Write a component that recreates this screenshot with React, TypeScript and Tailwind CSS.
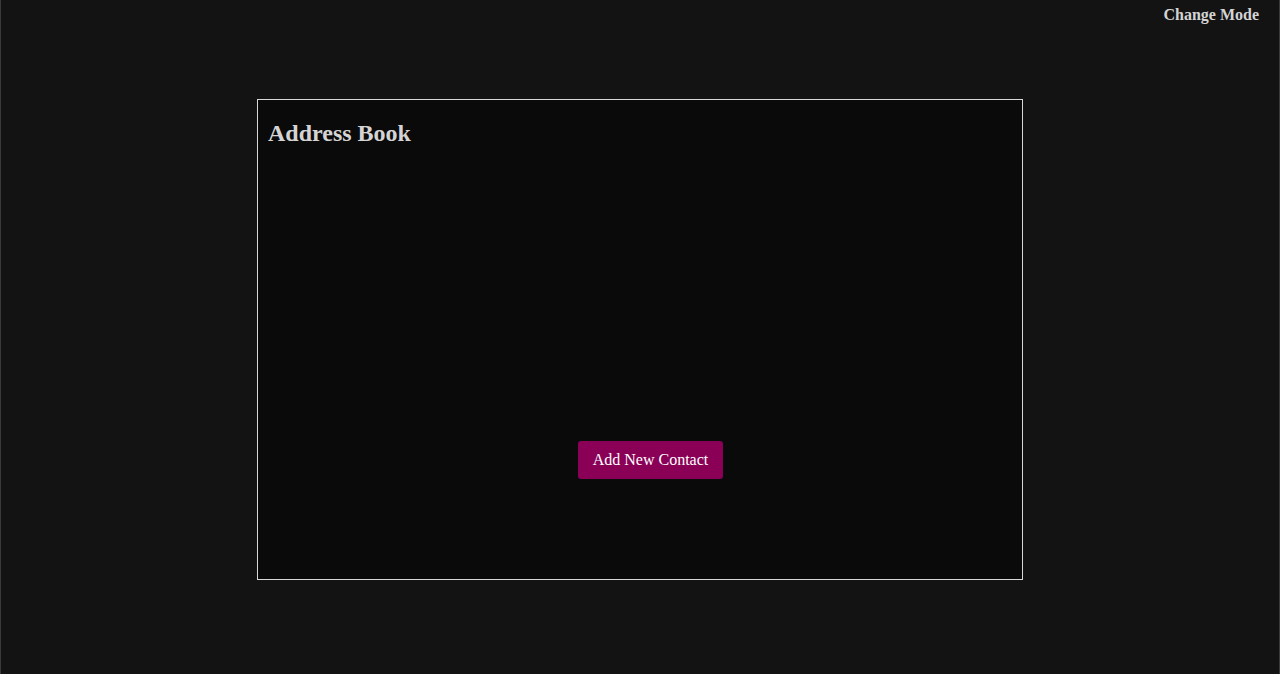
import React from "react";

export default function App() {
  return (
    <div className="relative h-[674px] w-full bg-[#131313] border-x border-[#3a3a3a] font-['Liberation_Serif',serif] overflow-hidden">
      {/* Mode toggle */}
      <button className="absolute right-[20px] top-[5px] text-[16px] font-bold text-[#d4d4d4] leading-[20px] cursor-pointer">
        Change Mode
      </button>

      <div className="flex justify-center pt-[99px]">
        <div className="w-[766px] h-[481px] bg-[#0a0a0a] border border-[#d8d8d8] flex flex-col px-[10px]">
          <h2 className="mt-[19px] text-[24px] font-bold leading-[28px] text-[#d4d4d4]">
            Address Book
          </h2>
          <div className="flex justify-center mt-[294px] pl-[21px]">
            <button className="bg-[#8a0057] text-white text-[16px] leading-[18px] px-[15px] py-[10px] rounded-[3px] cursor-pointer">
              Add New Contact
            </button>
          </div>
        </div>
      </div>
    </div>
  );
}
